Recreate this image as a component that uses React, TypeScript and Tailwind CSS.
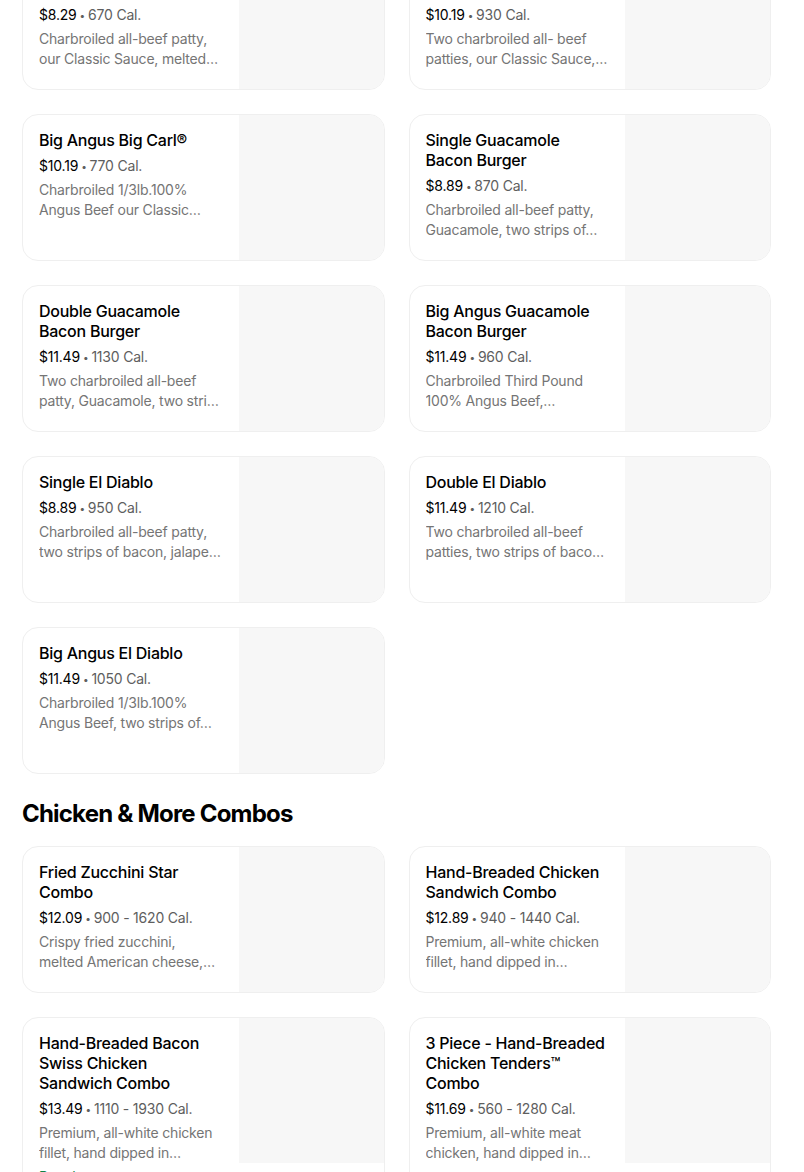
type Item = {
  name: string;
  price: string;
  cal: string;
  desc: [string, string];
  popular?: boolean;
};

const burgers: Item[] = [
  { name: 'Famous Star® with Cheese', price: '$8.29', cal: '670 Cal.', desc: ['Charbroiled all-beef patty,', 'our Classic Sauce, melted…'] },
  { name: 'Super Star® with Cheese', price: '$10.19', cal: '930 Cal.', desc: ['Two charbroiled all- beef', 'patties, our Classic Sauce,…'] },
  { name: 'Big Angus Big Carl®', price: '$10.19', cal: '770 Cal.', desc: ['Charbroiled 1/3lb.100%', 'Angus Beef our Classic…'] },
  { name: 'Single Guacamole Bacon Burger', price: '$8.89', cal: '870 Cal.', desc: ['Charbroiled all-beef patty,', 'Guacamole, two strips of…'] },
  { name: 'Double Guacamole Bacon Burger', price: '$11.49', cal: '1130 Cal.', desc: ['Two charbroiled all-beef', 'patty, Guacamole, two strip…'] },
  { name: 'Big Angus Guacamole Bacon Burger', price: '$11.49', cal: '960 Cal.', desc: ['Charbroiled Third Pound', '100% Angus Beef,…'] },
  { name: 'Single El Diablo', price: '$8.89', cal: '950 Cal.', desc: ['Charbroiled all-beef patty,', 'two strips of bacon, jalape…'] },
  { name: 'Double El Diablo', price: '$11.49', cal: '1210 Cal.', desc: ['Two charbroiled all-beef', 'patties, two strips of bacon…'] },
  { name: 'Big Angus El Diablo', price: '$11.49', cal: '1050 Cal.', desc: ['Charbroiled 1/3lb.100%', 'Angus Beef, two strips of…'] },
];

const chicken: Item[] = [
  { name: 'Fried Zucchini Star Combo', price: '$12.09', cal: '900 - 1620 Cal.', desc: ['Crispy fried zucchini,', 'melted American cheese,…'] },
  { name: 'Hand-Breaded Chicken Sandwich Combo', price: '$12.89', cal: '940 - 1440 Cal.', desc: ['Premium, all-white chicken', 'fillet, hand dipped in…'] },
  { name: 'Hand-Breaded Bacon Swiss Chicken Sandwich Combo', price: '$13.49', cal: '1110 - 1930 Cal.', desc: ['Premium, all-white chicken', 'fillet, hand dipped in…'], popular: true },
  { name: '3 Piece - Hand-Breaded Chicken Tenders™ Combo', price: '$11.69', cal: '560 - 1280 Cal.', desc: ['Premium, all-white meat', 'chicken, hand dipped in…'] },
];

function ItemCard({ item }: { item: Item }) {
  return (
    <div className="flex min-h-[147px] overflow-hidden rounded-2xl border border-[#efefef] bg-white">
      <div className="min-w-0 flex-1 px-4 pt-[15px] pb-4">
        <div className="text-[16px] font-medium leading-5 tracking-[-0.25px] text-black">{item.name}</div>
        <div className="mt-[6px] text-[14px] leading-5 tracking-[-0.2px] text-black">
          {item.price}
          <span className="mx-[3px] align-[1px] text-[10px] text-[#5e5e5e]">•</span>
          <span className="text-[#5e5e5e]">{item.cal}</span>
        </div>
        <div className="mt-1 text-[14px] leading-5 tracking-[-0.2px] text-[#757575]">
          <div className="truncate">{item.desc[0]}</div>
          <div className="truncate">{item.desc[1]}</div>
        </div>
        {item.popular && <div className="mt-1 text-[14px] leading-5 tracking-[-0.2px] text-[#0e8345]">Popular</div>}
      </div>
      <div className="h-[145px] w-[145px] shrink-0 bg-[#f7f7f7]" />
    </div>
  );
}

export default function App() {
  return (
    <div className="min-h-screen bg-white font-['Inter',sans-serif] antialiased">
      <div className="ml-[22px] mt-[-57px] w-[749px]">
        <div className="grid grid-cols-2 gap-6">
          {burgers.map((it) => (
            <ItemCard key={it.name} item={it} />
          ))}
        </div>
        <h2 className="mt-6 mb-4 text-[24px] font-bold leading-8 tracking-[-0.8px] text-black">Chicken &amp; More Combos</h2>
        <div className="grid grid-cols-2 gap-6">
          {chicken.map((it) => (
            <ItemCard key={it.name} item={it} />
          ))}
        </div>
      </div>
    </div>
  );
}
